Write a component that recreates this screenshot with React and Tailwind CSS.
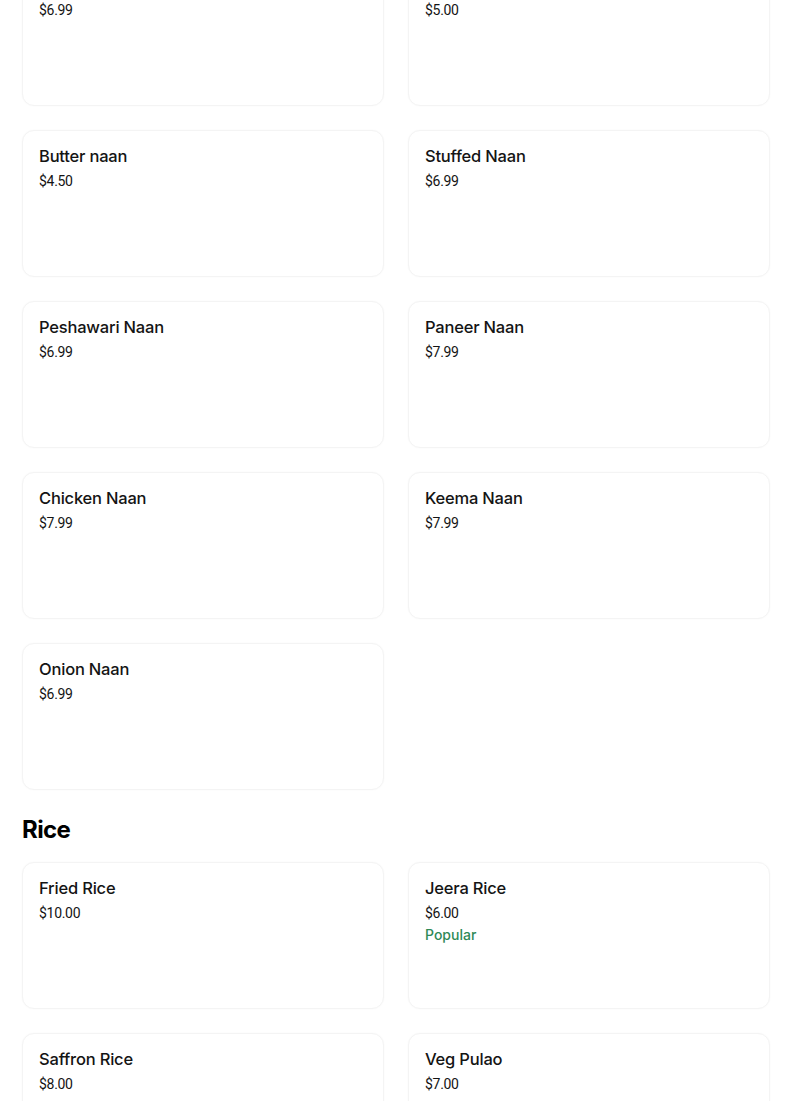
import React from "react";

const naan = [
  { name: "", price: "$6.99" },
  { name: "", price: "$5.00" },
  { name: "Butter naan", price: "$4.50" },
  { name: "Stuffed Naan", price: "$6.99" },
  { name: "Peshawari Naan", price: "$6.99" },
  { name: "Paneer Naan", price: "$7.99" },
  { name: "Chicken Naan", price: "$7.99" },
  { name: "Keema Naan", price: "$7.99" },
  { name: "Onion Naan", price: "$6.99" },
];

const rice = [
  { name: "Fried Rice", price: "$10.00" },
  { name: "Jeera Rice", price: "$6.00", popular: true },
  { name: "Saffron Rice", price: "$8.00" },
  { name: "Veg Pulao", price: "$7.00" },
];

const inter = { fontFamily: "Inter, 'Noto Sans', sans-serif" };

function ItemCard({ item }) {
  return (
    <div className="h-[147px] rounded-xl border border-[#f4f4f4] bg-white px-4 pt-[13px] shadow-[0_0_2px_rgba(0,0,0,0.03)]">
      {item.name ? (
        <p className="text-[16.5px] leading-6 font-medium tracking-[-0.2px] text-[#141414]" style={inter}>
          {item.name}
        </p>
      ) : (
        <div className="h-6" />
      )}
      <p className="text-[14px] leading-5 mt-[3px] text-[#141414] tracking-[-0.3px]">{item.price}</p>
      {item.popular && (
        <p className="text-[14px] leading-5 mt-[2px] font-medium text-[#2f8a57]" style={inter}>
          Popular
        </p>
      )}
    </div>
  );
}

export default function App() {
  return (
    <div
      className="h-[1101px] overflow-hidden bg-white"
      style={{ fontFamily: "Roboto, 'Noto Sans', sans-serif" }}
    >
      <div className="ml-[22px] w-[748px] mt-[-41px]">
        <div className="grid grid-cols-2 gap-6">
          {naan.map((item, i) => (
            <ItemCard key={i} item={item} />
          ))}
        </div>
        <h2 className="mt-[24px] mb-[16px] text-[24px] leading-8 font-bold tracking-[-0.6px] text-black" style={inter}>
          Rice
        </h2>
        <div className="grid grid-cols-2 gap-6">
          {rice.map((item, i) => (
            <ItemCard key={i} item={item} />
          ))}
        </div>
      </div>
    </div>
  );
}
